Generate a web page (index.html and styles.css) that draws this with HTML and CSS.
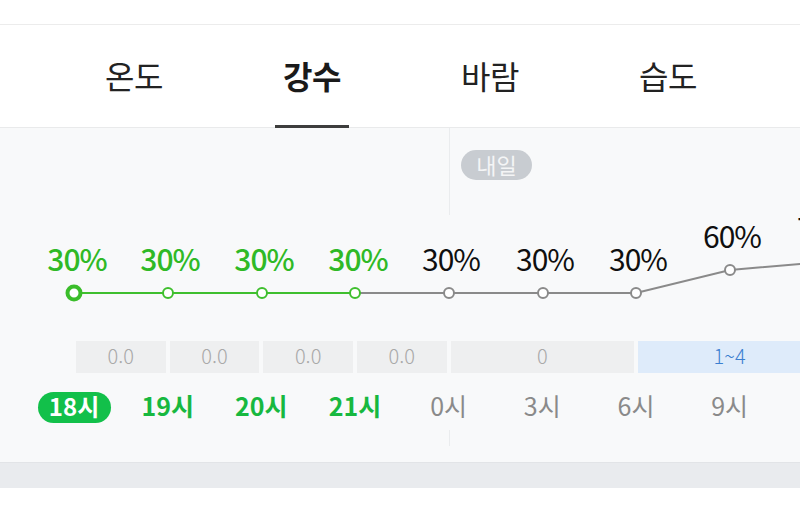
FILE: index.html
```html
<!DOCTYPE html>
<html lang="ko">
<head>
<meta charset="utf-8">
<link rel="stylesheet" href="styles.css">
</head>
<body>
<div class="topbar"></div>
<nav class="tabs">
  <div class="tab">온도</div>
  <div class="tab active"><span class="tab-label">강수</span></div>
  <div class="tab">바람</div>
  <div class="tab">습도</div>
</nav>
<section class="chart">
  <div class="day-divider day-divider-top"></div>
  <span class="badge">내일</span>
  <svg class="plot" width="800" height="200" viewBox="0 0 800 200">
    <polyline class="line-gray" points="355,165 449,165 543,165 636,165 730,142 824,134"/>
    <polyline class="line-green" points="74,165 168,165 262,165 355,165"/>
    <circle class="pt-green-big" cx="74" cy="165" r="6.5"/>
    <circle class="pt-green" cx="168" cy="165" r="5"/>
    <circle class="pt-green" cx="262" cy="165" r="5"/>
    <circle class="pt-green" cx="355" cy="165" r="5"/>
    <circle class="pt-gray" cx="449" cy="165" r="5"/>
    <circle class="pt-gray" cx="543" cy="165" r="5"/>
    <circle class="pt-gray" cx="636" cy="165" r="5"/>
    <circle class="pt-gray" cx="730" cy="142" r="5"/>
    <circle class="pt-gray" cx="824" cy="134" r="5"/>
    <text class="val val-green" x="77" y="143">30%</text>
    <text class="val val-green" x="170" y="143">30%</text>
    <text class="val val-green" x="264" y="143">30%</text>
    <text class="val val-green" x="358" y="143">30%</text>
    <text class="val" x="451" y="143">30%</text>
    <text class="val" x="545" y="143">30%</text>
    <text class="val" x="638" y="143">30%</text>
    <text class="val" x="732" y="120">60%</text>
    <text class="val" x="826" y="112">70%</text>
  </svg>
  <div class="precip">
    <div class="cell">0.0</div>
    <div class="cell">0.0</div>
    <div class="cell">0.0</div>
    <div class="cell">0.0</div>
    <div class="cell span2">0</div>
    <div class="cell span2 rain">1~4</div>
  </div>
  <div class="hours">
    <div class="hour"><span class="now">18시</span></div>
    <div class="hour today">19시</div>
    <div class="hour today">20시</div>
    <div class="hour today">21시</div>
    <div class="hour">0시</div>
    <div class="hour">3시</div>
    <div class="hour">6시</div>
    <div class="hour">9시</div>
  </div>
  <div class="day-divider day-divider-bottom"></div>
</section>
<div class="band"></div>
<div class="bottom"></div>
</body>
</html>
```

FILE: styles.css
```css
* { box-sizing: border-box; }
html, body {
  margin: 0;
  padding: 0;
  background: #ffffff;
  font-family: "Noto Sans CJK KR", "Noto Sans", sans-serif;
  width: 800px;
  height: 518px;
  overflow: hidden;
}
.topbar {
  height: 25px;
  background: #ffffff;
  border-bottom: 1px solid #ececec;
}
.tabs {
  height: 103px;
  display: flex;
  padding-left: 45px;
  background: #ffffff;
  border-bottom: 1px solid #e9eaeb;
}
.tab {
  width: 178px;
  display: flex;
  align-items: center;
  justify-content: center;
  font-size: 32px;
  color: #222222;
  letter-spacing: -0.5px;
  padding-bottom: 2px;
}
.tab.active {
  font-weight: bold;
  color: #1a1a1a;
}
.tab-label {
  position: relative;
  align-self: stretch;
  display: flex;
  align-items: center;
}
.tab-label::after {
  content: "";
  position: absolute;
  left: -8px;
  right: -8px;
  bottom: -3px;
  height: 3px;
  background: #3d3d3d;
}
.chart {
  position: relative;
  height: 335px;
  background: #f8f9fa;
  overflow: hidden;
  border-bottom: 1px solid #e2e4e7;
}
.day-divider {
  position: absolute;
  left: 449px;
  width: 1px;
  background: #eaecee;
}
.day-divider-top { top: 0; height: 87px; }
.day-divider-bottom { top: 302px; height: 16px; }
.badge {
  position: absolute;
  left: 461px;
  top: 22px;
  width: 71px;
  height: 30px;
  border-radius: 15px;
  background: #c8ccd1;
  color: #f4f5f6;
  font-size: 22px;
  line-height: 28px;
  padding-bottom: 2px;
  text-align: center;
}
.plot {
  display: block;
}
.line-green {
  fill: none;
  stroke: #3fbf2e;
  stroke-width: 2;
}
.line-gray {
  fill: none;
  stroke: #8a8a8a;
  stroke-width: 2;
}
.pt-green-big {
  fill: #ffffff;
  stroke: #3abd2a;
  stroke-width: 4;
}
.pt-green {
  fill: #ffffff;
  stroke: #3fbf2e;
  stroke-width: 2;
}
.pt-gray {
  fill: #ffffff;
  stroke: #8a8a8a;
  stroke-width: 2;
}
.val {
  font-family: "Noto Sans CJK KR", "Noto Sans", sans-serif;
  font-size: 30px;
  text-anchor: middle;
  fill: #0f0f0f;
  letter-spacing: -1px;
}
.val-green {
  fill: #2fb926;
  font-weight: 500;
}
.precip {
  display: grid;
  grid-template-columns: repeat(8, 93.67px);
  padding-left: 74px;
  margin-top: 13px;
  height: 32px;
}
.cell {
  margin: 0 2px;
  background: #eeeff0;
  color: #a9a9a9;
  font-size: 20px;
  font-weight: 300;
  line-height: 30px;
  padding-bottom: 2px;
  text-align: center;
}
.cell.span2 { grid-column: span 2; }
.cell.rain {
  background: #deebfa;
  color: #3b7fd0;
}
.hours {
  display: grid;
  grid-template-columns: repeat(9, 93.67px);
  padding-left: 27.2px;
  margin-top: 19px;
  height: 31px;
}
.hour {
  display: flex;
  align-items: center;
  justify-content: center;
  height: 31px;
  line-height: 27px;
  padding-bottom: 4px;
  font-size: 25px;
  color: #8a8a8a;
  white-space: nowrap;
}
.hour:first-child {
  padding-bottom: 0;
}
.hour.today {
  color: #17b83f;
  font-weight: bold;
}
.now {
  display: inline-block;
  width: 73px;
  height: 31px;
  border-radius: 16px;
  background: #12c04a;
  color: #ffffff;
  font-weight: bold;
  font-size: 24px;
  line-height: 28px;
  padding-bottom: 3px;
  text-align: center;
}
.band {
  height: 25px;
  background: #e9ebee;
}
.bottom {
  height: 30px;
  background: #ffffff;
}
```
